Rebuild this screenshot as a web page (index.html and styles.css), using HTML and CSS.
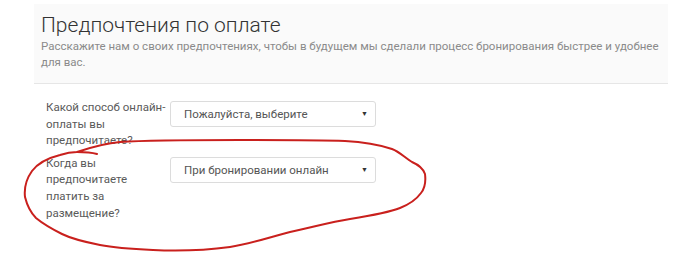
FILE: index.html
```html
<!DOCTYPE html>
<html lang="ru">
<head>
  <meta charset="UTF-8">
  <meta name="viewport" content="width=device-width, initial-scale=1.0">
  <title>Предпочтения по оплате</title>
  <link rel="stylesheet" href="styles.css">
</head>
<body>

  <div id="payment-prefs">
    <div class="prefs-header">
      <h1>Предпочтения по оплате</h1>
      <p>Расскажите нам о своих предпочтениях, чтобы в будущем мы сделали процесс бронирования быстрее и удобнее для вас.</p>
    </div>

    <form class="prefs-form">
      <div class="form-row">
        <label for="pay-method">Какой способ онлайн-оплаты вы предпочитаете?</label>
        <div class="select-box" id="pay-method">
          <span>Пожалуйста, выберите</span>
          <span class="arrow">&#9660;</span>
        </div>
      </div>

      <div class="form-row">
        <label for="pay-time">Когда вы предпочитаете платить за размещение?</label>
        <div class="select-box" id="pay-time">
          <span>При бронировании онлайн</span>
          <span class="arrow">&#9660;</span>
        </div>
      </div>
    </form>

    <!-- hand-drawn mark over the second question -->
    <svg class="scribble" width="678" height="263" viewBox="0 0 678 263">
      <path d="M97 154 C90 152 84 152 77 152 C95 146 108 143 120 142 C150 140 200 140 240 140 C280 140 320 140 345 141 C365 142 380 145 392 149 C400 152 405 158 412 162 C419 165 423 168 425 174 C426 182 425 188 421 193 C416 200 410 204 400 208 C390 212 375 215 350 219 C330 222 310 228 290 232 C270 237 250 244 230 247 C200 251 175 251 153 250 C130 249 115 248 100 245 C85 242 72 239 62 234 C50 228 42 223 36 218 C30 212 27 205 25 197 C24 188 27 178 32 171 C38 163 48 158 60 155 C66 153 72 152 77 152" />
    </svg>
  </div>

</body>
</html>
```

FILE: styles.css
```css
body {
  margin: 0;
  font-family: Roboto, "Open Sans", sans-serif;
  background-color: #fff;
  color: #555;
}

#payment-prefs {
  position: relative;
  width: 678px;
  height: 263px;
  padding-top: 4px;
  box-sizing: border-box;
  overflow: hidden;
}

.prefs-header {
  margin-left: 34px;
  width: 634px;
  padding: 8px 7px 13px;
  box-sizing: border-box;
  background-color: #fafafa;
  border-bottom: 1px solid #e6e6e6;
}

.prefs-header h1 {
  margin: 0;
  font-size: 21px;
  font-weight: 300;
  line-height: 26px;
  color: #333;
}

.prefs-header p {
  margin: 0;
  font-size: 11.5px;
  line-height: 16px;
  color: #8a8a8a;
}

.prefs-form {
  padding: 15px 0 0 46px;
}

.form-row {
  display: flex;
  align-items: flex-start;
  margin-bottom: 6px;
}

.form-row label {
  width: 120px;
  margin-right: 4px;
  font-size: 11.5px;
  line-height: 16.6px;
  color: #5a5a5a;
}

.select-box {
  display: flex;
  justify-content: space-between;
  align-items: center;
  width: 206px;
  height: 26px;
  margin-top: 2px;
  padding: 0 7px 0 13px;
  box-sizing: border-box;
  border: 1px solid #dcdcdc;
  border-radius: 3px;
  background-color: #fff;
  font-size: 11.5px;
  color: #555;
}

.select-box .arrow {
  font-size: 7px;
  color: #333;
}

.scribble {
  position: absolute;
  top: 0;
  left: 0;
  pointer-events: none;
}

.scribble path {
  fill: none;
  stroke: #c9201d;
  stroke-width: 2;
  stroke-linecap: round;
  stroke-linejoin: round;
}
```
